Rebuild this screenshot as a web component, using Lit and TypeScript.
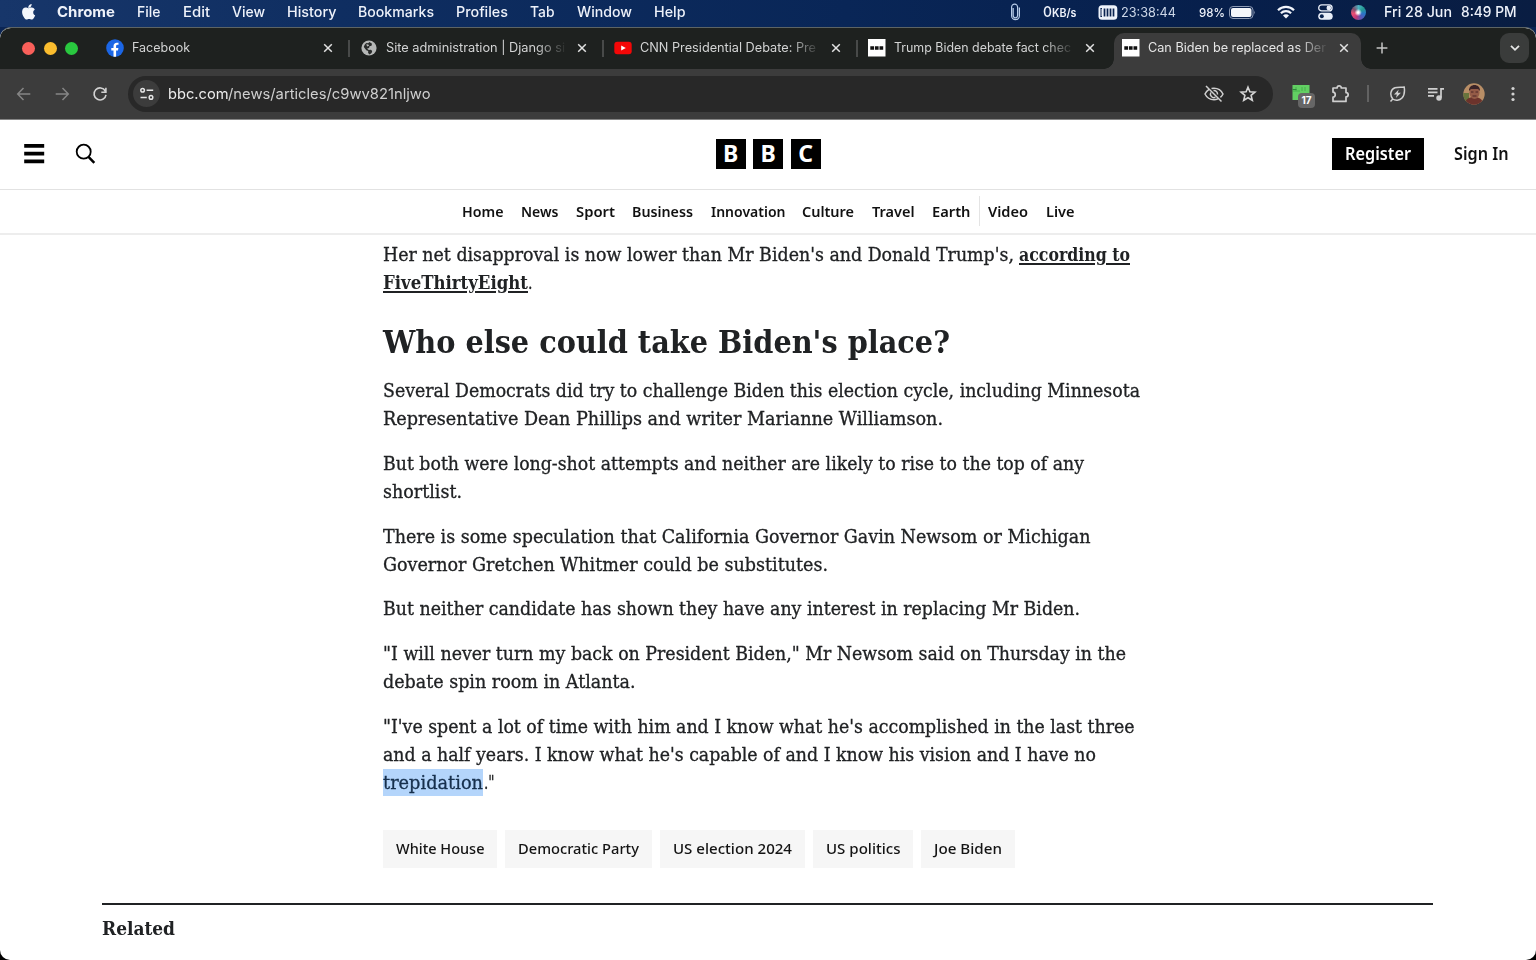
import { LitElement, html, css, nothing } from "lit";
import { customElement, property, state, query } from "lit/decorators.js";
import { styleMap } from "lit/directives/style-map.js";
import { classMap } from "lit/directives/class-map.js";

/** A run of text set to an exact measure. */
@customElement("fit-text")
class FitText extends LitElement {
  static styles = css`
    :host { display: inline-block; white-space: pre; flex: none; }
    .run { display: inline-block; transform-origin: 0 50%; }
    :host([underlined]) .run { text-decoration: underline; text-decoration-thickness: 1.5px; text-underline-offset: 2px; }
    .box { display: block; }
  `;
  @property({ type: Number }) w = 0;
  @state() private scale = 1;
  @query(".run") private run!: HTMLElement;

  firstUpdated() {
    this.measure();
    document.fonts.ready.then(() => this.measure());
  }

  private measure() {
    const natural = this.run.getBoundingClientRect().width / this.scale;
    if (natural > 0 && this.w > 0) this.scale = this.w / natural;
  }

  render() {
    return html`<span class="box" style=${styleMap({ width: this.w + "px" })}><span class="run" style=${styleMap({ transform: `scaleX(${this.scale})` })}><slot></slot></span></span>`;
  }
}

const t = (text: string, w: number, cls = "") => html`<fit-text class=${cls} w=${w}>${text}</fit-text>`;

@customElement("menu-bar")
class MenuBar extends LitElement {
  static styles = css`
    :host { display: flex; align-items: center; height: 27px; padding-bottom: 3px; box-sizing: border-box; color: #eef2fa;
      background: linear-gradient(90deg, #17366a 0%, #0e2d60 25%, #092657 55%, #071f4b 80%, #091d42 100%);
      font: 500 14.5px/24px Inter, "Liberation Sans", sans-serif; }
    svg { display: block; flex: none; }
    .apple { margin: 0 21px 0 21px; }
    .menus { display: flex; gap: 22px; }
    .app { font-weight: 700; }
    .status { display: flex; align-items: center; margin-left: auto; padding-right: 20px; }
    .clip { margin-right: 21.5px; }
    .rate { font-size: 11.5px; margin-right: 22px; font-weight: 600; padding-top: 1px; }
    .zero { font-size: 15px; font-weight: 500; }
    .timer { font-size: 12.5px; font-weight: 400; margin: 0 23px 0 2.5px; color: #cdd7e8; padding-top: 1px; }
    .pct { font-size: 12px; margin-right: 4.5px; padding-top: 1px; }
    .battery { margin-right: 21px; }
    .wifi { margin-right: 22.5px; }
    .control { margin-right: 18px; }
    .orb { width: 15px; height: 15px; border-radius: 50%; margin-right: 18px;
      background: radial-gradient(circle at 48% 50%, #fff 0 8%, transparent 34%), conic-gradient(#4bb2c2, #249b92, #2776c9, #5b56b7, #bf3977, #ec4e74, #7b516f, #4bb2c2); }
    .date { margin-right: 9px; }
  `;
  private menus: [string, number][] = [["File", 23.5], ["Edit", 27], ["View", 33], ["History", 49.5], ["Bookmarks", 76], ["Profiles", 52], ["Tab", 24.5], ["Window", 55], ["Help", 31.5]];
  render() {
    return html`
      <svg class="apple" width="15" height="18" viewBox="0 0 15 18"><path fill="#f4f7fc" d="M10.6 1c.1 1.100-.3 2.050-.9 2.800-.65.750-1.600 1.250-2.450 1.200-.1-1 .35-2.050.95-2.700C8.850 1.550 9.850 1.050 10.600 1zM13.800 6.700c-1 .6-1.600 1.500-1.600 2.700 0 1.400.8 2.400 2 2.900-.3.900-.7 1.700-1.200 2.400-.7 1-1.300 1.900-2.300 1.900s-1.400-.6-2.600-.6c-1.200 0-1.600.6-2.500.6-1 0-1.700-.9-2.400-1.900C1.900 12.900.9 10.400 1.100 8.500c.2-2.400 1.700-3.900 3.500-3.900 1.100 0 2.100.7 2.900.7.700 0 1.900-.8 3.300-.7 1.300.1 2.300.6 3 2.100z"/></svg>
      <div class="menus">${t("Chrome", 58, "app")}${this.menus.map(([m, w]) => t(m, w))}</div>
      <div class="status">
        <svg class="clip" width="11" height="18" viewBox="0 0 11 18" fill="none" stroke="#b7cbe8" stroke-width="1.200"><path d="M3.200 5v7.600a2.200 2.200 0 0 0 4.400 0V4.200a3 3 0 0 0-6-.2v8.700a3.900 3.900 0 0 0 7.800 0V4.500"/></svg>
        <div class="rate">${t("0", 9, "zero")}${t("KB/s", 24.500)}</div>
        <svg width="20" height="15" viewBox="0 0 20 15"><rect x=".5" y=".2" width="18.800" height="14.600" rx="3.500" fill="#eef3fb"/><path d="M3 3.500v8M2.500 3.500h1.500M2.500 11.500h1.500" stroke="#0a2350" stroke-width="1"/><path d="M6.500 3.500v8M9.500 3.500v8M12.500 3.500v8M15.500 3.500v8" stroke="#0a2350" stroke-width="1.700"/></svg>
        ${t("23:38:44", 55, "timer")}
        ${t("98%", 26, "pct")}
        <svg class="battery" width="27" height="13" viewBox="0 0 27 13"><rect x=".5" y=".5" width="23.500" height="12" rx="3.500" fill="none" stroke="#8d9ab4"/><rect x="2" y="2" width="20.500" height="9" rx="2" fill="#f4f6fa"/><path d="M25.200 4.500q1.500 1.800 0 4z" fill="#8d9ab4"/></svg>
        <svg class="wifi" width="18" height="14" viewBox="0 0 18 14" fill="none" stroke="#f2f5fb" stroke-width="2.200"><path d="M1 5.200a11.300 11.300 0 0 1 16 0M3.900 8.300a7.200 7.200 0 0 1 10.200 0"/><path d="M9 13.500L6 10.500a4.200 4.200 0 0 1 6 0z" fill="#f2f5fb" stroke="none"/></svg>
        <svg class="control" width="15" height="16" viewBox="0 0 15 16"><rect x=".7" y=".9" width="13.400" height="6" rx="3" fill="none" stroke="#e9eef8" stroke-width="1.300"/><circle cx="10.800" cy="3.900" r="2.300" fill="#e9eef8"/><rect x=".2" y="8.800" width="14.500" height="7" rx="3.500" fill="#e9eef8"/><circle cx="3.800" cy="12.300" r="2" fill="#0a2350"/></svg>
        <div class="orb"></div>
        ${t("Fri 28 Jun", 68, "date")}${t("8:49 PM", 55.500)}
      </div>`;
  }
}

const bbcIcon = html`<svg width="18" height="18" viewBox="0 0 18 18"><path fill="#fff" d="M0 0h17.500v17.500H0z"/><path fill="#111" d="M2.300 7.200H6v3.500H2.300zM6.900 7.200h3.700v3.500H6.900zM11.500 7.200h3.700v3.500h-3.700z"/></svg>`;

@customElement("tab-strip")
class TabStrip extends LitElement {
  static styles = css`
    :host { display: flex; height: 41px; background: #1e211f; color: #d3d4d4; box-sizing: border-box; border-radius: 10px 10px 0 0; font: 400 12.800px/20px Inter, "Liberation Sans", sans-serif; }
    svg { display: block; flex: none; }
    .lights { display: flex; gap: 8.500px; padding: 13.500px 0 0 22px; width: 76px; flex: none; }
    .light { width: 13px; height: 13px; border-radius: 50%; }
    .red { background: #f9605a; }
    .yellow { background: #fbbd2e; }
    .green { background: #29c83f; }
    .tab { display: flex; width: 254px; height: 36px; margin-top: 5px; box-sizing: border-box; padding: 0 0 6px 8px; align-items: center; position: relative; }
    .favicon { width: 18px; margin-right: 8px; }
    .title { width: 179px; overflow: hidden; display: flex; margin-right: 11px; }
    .faded { -webkit-mask-image: linear-gradient(90deg, #000 150px, transparent 181px); }
    .divider { width: 1.500px; height: 17px; background: #484a49; margin-left: 14px; }
    .active { background: #3c3c3c; border-radius: 10px 10px 0 0; width: 247px; color: #e6e6e6; }
    .active::before, .active::after { content: ""; position: absolute; bottom: 0; width: 10px; height: 10px; }
    .active::before { left: -10px; background: radial-gradient(circle at 0 0, transparent 9.500px, #3c3c3c 10px); }
    .active::after { right: -10px; background: radial-gradient(circle at 100% 0, transparent 9.500px, #3c3c3c 10px); }
    .plus { margin: 14px 0 0 15px; }
    .more { width: 29px; height: 30px; border-radius: 9px; background: #3a3c3b; margin: 5px 7px 0 auto; display: flex; align-items: center; justify-content: center; }
  `;
  private icons = [
    html`<svg width="18" height="18" viewBox="0 0 18 18"><circle cx="9" cy="9" r="8.800" fill="#1b66e5"/><path fill="#fff" d="M7.500 17.700v-6.200H5.300V9h2.200V7.200c0-2.300 1.300-3.500 3.300-3.500.8 0 1.700.1 1.700.1v2h-1c-1 0-1.400.6-1.400 1.300V9h2.300l-.4 2.500h-1.900v6.200z"/></svg>`,
    html`<svg width="18" height="18" viewBox="0 0 18 18"><circle cx="9" cy="9" r="7.600" fill="#b5b7b6"/><path fill="#292b2a" d="M9.500 3.100 12 4.700l-.5 2-2 .5-.4 1.900-2 .3 1.600 1.500 2.300-.1 1.200 1.300-.6 2-2.100 1.400-1.400-1.400.1-2.100-1.900-.8-2.500-3.100C4.100 6.600 5 4.800 6.500 3.900l1.600.4z"/><path fill="#b5b7b6" d="m6.300 5.200 2 .3.800 1.300-2 .8zM11.700 9.200l3-.8.300 2-2 .8z"/></svg>`,
    html`<svg width="18" height="18" viewBox="0 0 18 18"><rect x=".3" y="2.800" width="17.400" height="12.400" rx="3" fill="#f40707"/><path fill="#fff" d="m7.200 6.500 4.600 2.500-4.600 2.500z"/></svg>`,
    bbcIcon, bbcIcon,
  ];
  private tabs: [string, number][] = [["Facebook", 58], ["Site administration | Django si", 179], ["CNN Presidential Debate: Pre", 176], ["Trump Biden debate fact chec", 177], ["Can Biden be replaced as Der", 178]];
  render() {
    return html`
      <div class="lights"><div class="light red"></div><div class="light yellow"></div><div class="light green"></div></div>
      ${this.tabs.map(([title, w], i) => html`
        <div class=${classMap({ tab: true, active: i === 4 })}>
          <div class="favicon">${this.icons[i]}</div>
          <div class=${classMap({ title: true, faded: i > 0 })}>${t(title, w)}</div>
          <svg width="12" height="12" viewBox="0 0 12 12" stroke="#e2e2e2" stroke-width="1.500"><path d="m2.200 2.200 7.600 7.600M9.800 2.200 2.200 9.800"/></svg>
          ${i < 3 ? html`<div class="divider"></div>` : nothing}
        </div>`)}
      <svg class="plus" width="12" height="12" viewBox="0 0 12 12" stroke="#c5c5c5" stroke-width="1.500"><path d="M6 .6v10.800M.6 6h10.800"/></svg>
      <div class="more"><svg width="10" height="8" viewBox="0 0 10 8" fill="none" stroke="#e6e6e6" stroke-width="1.800"><path d="m1 1.800 4 4 4-4"/></svg></div>`;
  }
}

@customElement("tool-bar")
class ToolBar extends LitElement {
  static styles = css`
    :host { display: flex; align-items: center; height: 51px; padding-bottom: 1px; border-bottom: 1px solid #858585; background: #3c3c3c; box-sizing: border-box; font: 400 14.500px/22px Inter, "Liberation Sans", sans-serif; color: #cfcfcf; }
    svg { display: block; flex: none; }
    .nav { display: flex; gap: 20px; padding-left: 15px; width: 113px; flex: none; }
    .omnibox { display: flex; align-items: center; width: 1145px; height: 36px; border-radius: 18px; background: #282828; box-sizing: border-box; padding: 0 16px 0 5px; flex: none; }
    .site { width: 27px; height: 27px; border-radius: 50%; background: #3c3c3c; display: flex; align-items: center; justify-content: center; margin-right: 7.500px; }
    .domain { color: #ececec; }
    .eye { margin: 0 15px 0 auto; }
    .calendar { position: relative; width: 24px; height: 24px; margin-left: 18px; }
    .badge { position: absolute; left: 7px; top: 11px; width: 17px; height: 15px; border-radius: 4px; background: #666; color: #fff; font: 700 10px/15px Inter, sans-serif; text-align: center; }
    .puzzle { margin-left: 16px; }
    .divider { width: 1.500px; height: 17px; background: #626262; margin: 0 20px 0 17px; }
    .music { margin: 0 18px 0 21px; }
    .dots { margin-left: 25px; }
  `;
  render() {
    return html`
      <div class="nav">
        <svg width="18" height="18" viewBox="0 0 18 18" fill="none" stroke="#858585" stroke-width="1.500"><path d="M15.300 9H3M8.500 3 2.700 9l5.800 6"/></svg>
        <svg width="18" height="18" viewBox="0 0 18 18" fill="none" stroke="#858585" stroke-width="1.500"><path d="M2.700 9H15M9.500 3l5.800 6-5.800 6"/></svg>
        <svg width="18" height="18" viewBox="0 0 18 18" fill="none" stroke="#d1d1d1" stroke-width="1.600"><path d="M14.300 6A6 6 0 1 0 15 9.800M14.900 2.700v4.500h-4.600"/></svg>
      </div>
      <div class="omnibox">
        <div class="site"><svg width="16" height="16" viewBox="0 0 16 16" fill="none" stroke="#e5e5e5" stroke-width="1.500"><circle cx="3.600" cy="4.200" r="1.800"/><path d="M7.600 4.200h6.600M1.500 11.400h6.300"/><circle cx="12" cy="11.400" r="1.800"/></svg></div>
        ${t("bbc.com", 60.500, "domain")}${t("/news/articles/c9wv821nljwo", 202.500)}
        <svg class="eye" width="20" height="20" viewBox="0 0 20 20" fill="none" stroke="#cfcfcf" stroke-width="1.500"><path d="m2 2 15.500 15.500M5 5.300C3.300 6.400 1.900 8 1 10c1.700 3.500 5 5.700 9 5.700 1.400 0 2.700-.3 3.900-.8M7.500 4.600c.8-.2 1.600-.3 2.500-.3 4 0 7.300 2.200 9 5.700-.6 1.300-1.500 2.500-2.600 3.400M6.700 8.500a3.600 3.600 0 0 0 4.700 4.800M9.500 6.500a3.600 3.600 0 0 1 4 4"/></svg>
        <svg width="18" height="18" viewBox="0 0 18 18" fill="none" stroke="#d5d5d5" stroke-width="1.600"><path d="m9 2.200 1.900 4.600 5 .4-3.800 3.200 1.200 4.900L9 12.700l-4.300 2.600 1.200-4.900-3.800-3.200 5-.4z"/></svg>
      </div>
      <div class="calendar"><svg width="19" height="19" viewBox="0 0 19 19"><path fill="#62cf63" d="M1.500 3h17v15h-17z"/><path d="M2 9h7M11 5v4M14 5v4M5 5v4" stroke="#46b04c" stroke-width="1"/><path d="M1.500 7.500h4" stroke="#2c8a3a"/></svg><div class="badge">17</div></div>
      <svg class="puzzle" width="19" height="20" viewBox="0 0 19 20" fill="none" stroke="#cfcfcf" stroke-width="1.700"><path stroke-linejoin="round" d="M2 4h4.100c0-2.800 4.200-2.800 4.200 0H15v4.600c2.900 0 2.900 4.200 0 4.200V17.400H2v-4.200c3-.3 3-4.700 0-5z"/></svg>
      <div class="divider"></div>
      <svg width="17" height="18" viewBox="0 0 17 18" fill="none" stroke="#cfcfcf" stroke-width="1.500"><path d="M1.500 16.500 3.800 14M3.800 14C.5 10 1.400 4.500 6 2.800 8.700 1.800 12 2.500 15.200 2c.6 4 .4 8.300-2.200 11-2.500 2.500-6.600 3-9.200 1z"/><path fill="#cfcfcf" stroke="none" d="M9.700 4.500 5 9.600h2.900l-1 3.400 5-5.200H8.800z"/></svg>
      <svg class="music" width="18" height="16" viewBox="0 0 18 16" fill="none" stroke="#cfcfcf" stroke-width="1.700"><path d="M1 2.800h9.500M1 6.300h9.500M1 9.800h6M17 2.800h-3v9"/><circle cx="12" cy="11.900" r="1.900" fill="#cfcfcf"/></svg>
      <svg width="22" height="22" viewBox="0 0 22 22"><defs><clipPath id="face"><circle cx="11" cy="11" r="10.700"/></clipPath></defs><g clip-path="url(#face)"><path fill="#b88e66" d="M0 0h22v22H0z"/><path fill="#68743d" d="M0 10h6v9H0z"/><path fill="#6c332c" d="M2 22c0-6 4-8 9-8s9 2 9 8z"/><ellipse cx="11.500" cy="9.500" rx="5" ry="6.500" fill="#945b47"/><path fill="#3b2428" d="M6 8c-.5-8 11.500-8 11 0l-2-2H8z"/><path d="M8 9h2.500M12.500 9H15M9.500 13h4" stroke="#4b2627" stroke-width="1.200"/></g></svg>
      <svg class="dots" width="6" height="18" viewBox="0 0 6 18" fill="#d3d3d3"><circle cx="3" cy="3.500" r="1.600"/><circle cx="3" cy="9" r="1.600"/><circle cx="3" cy="14.500" r="1.600"/></svg>`;
  }
}

@customElement("site-header")
class SiteHeader extends LitElement {
  static styles = css`
    :host { display: block; background: #fff; color: #111; font-family: "Noto Sans", "Open Sans", sans-serif; font-weight: 600; }
    svg { display: block; }
    .top { display: grid; grid-template-columns: 1fr auto 1fr; align-items: center; height: 70px; border-bottom: 1px solid #e2e2e2; box-sizing: border-box; padding: 0 28px 2px 24px; }
    .left { display: flex; gap: 30px; align-items: center; }
    .logo { display: flex; gap: 7.500px; margin-left: 4.500px; }
    .block { width: 30px; height: 30px; background: #000; color: #fff; display: flex; align-items: center; justify-content: center; font: 700 23px/28px "Noto Sans", sans-serif; }
    .letter { height: 30px; }
    .right { display: flex; align-items: center; justify-content: flex-end; font-size: 17.300px; line-height: 32px; gap: 29.500px; }
    .register { background: #000; color: #fff; height: 32px; padding: 0 13px; }
    .nav { display: flex; height: 45px; border-bottom: 2px solid #ededed; box-sizing: border-box; align-items: center; padding: 0 0 1px 462px; font-size: 15px; line-height: 22px; gap: 17.400px; }
    .rule { width: 1px; height: 30px; background: #e4e4e4; margin: 0 -9.400px 0 -8.400px; }
  `;
  private links: [string, number][] = [["Home", 41.5], ["News", 37.5], ["Sport", 39], ["Business", 61], ["Innovation", 74.500], ["Culture", 52], ["Travel", 42.500], ["Earth", 38.500]];
  render() {
    return html`
      <div class="top">
        <div class="left">
          <svg width="21" height="20" viewBox="0 0 21 20"><path d="M.2 0h20v3.800H.2zM.2 7.700h20v3.800H.2zM.2 15.400h20v3.800H.2z"/></svg>
          <svg width="22" height="22" viewBox="0 0 22 22" fill="none" stroke="#000"><circle cx="8.700" cy="8.700" r="7" stroke-width="1.800"/><path d="m13.500 13.800 5.800 6" stroke-width="2.500"/></svg>
        </div>
        <div class="logo">${["B", "B", "C"].map((l) => html`<div class="block"><div class="letter">${l}</div></div>`)}</div>
        <div class="right"><div class="register">${t("Register", 66)}</div>${t("Sign In", 54.500)}</div>
      </div>
      <div class="nav">${this.links.map(([l, w]) => t(l, w))}<div class="rule"></div>${t("Video", 40)}${t("Live", 28.500)}</div>`;
  }
}

@customElement("news-article")
class NewsArticle extends LitElement {
  static styles = css`
    :host { display: block; color: #202224; font: 400 19px/27.800px "DejaVu Serif Condensed", "DejaVu Serif", serif; font-stretch: condensed; padding-top: 5.900px; }
    .body { margin-left: 383px; width: 770px; -webkit-text-stroke: 0.300px currentColor; }
    .para { margin-bottom: 17.100px; }
    .line { display: flex; height: 27.800px; }
    .link { font-weight: 700; -webkit-text-stroke: 0; }
    .gap { margin-left: 5px; }
    .heading { font-weight: 700; font-size: 32px; line-height: 46px; margin: 22.500px 0 12.400px; height: 46px; -webkit-text-stroke: 0; }
    .marked { background: #b4d5fb; color: #17304d; margin-right: 1px; }
    .tags { display: flex; gap: 8px; margin-top: 33.500px; font: 500 15px/36.500px "Noto Sans", "Open Sans", sans-serif; color: #141414; -webkit-text-stroke: 0; }
    .tag { background: #f6f6f6; padding: 0 12.900px; height: 38px; }
    .related { margin: 34.900px 103px 0 102px; border-top: 2px solid #202224; padding-top: 10.500px; font-weight: 700; font-size: 19px; }
  `;
  private paragraphs: [string, number][][] = [
    [["Several Democrats did try to challenge Biden this election cycle, including Minnesota", 757], ["Representative Dean Phillips and writer Marianne Williamson.", 560]],
    [["But both were long-shot attempts and neither are likely to rise to the top of any", 701], ["shortlist.", 79]],
    [["There is some speculation that California Governor Gavin Newsom or Michigan", 707.500], ["Governor Gretchen Whitmer could be substitutes.", 445]],
    [["But neither candidate has shown they have any interest in replacing Mr Biden.", 697]],
    [["\"I will never turn my back on President Biden,\" Mr Newsom said on Thursday in the", 743], ["debate spin room in Atlanta.", 252.500]],
  ];
  private tags: [string, number][] = [["White House", 88.500], ["Democratic Party", 121], ["US election 2024", 119], ["US politics", 74.500], ["Joe Biden", 68]];
  render() {
    return html`
      <div class="body">
        <div>
          <div class="line">${t("Her net disapproval is now lower than Mr Biden's and Donald Trump's,", 631)}<fit-text underlined class="link gap" w="111">according to</fit-text></div>
          <div class="line"><fit-text underlined class="link" w="145">FiveThirtyEight</fit-text>${t(".", 4.500)}</div>
        </div>
        <div class="heading">${t("Who else could take Biden's place?", 567)}</div>
        ${this.paragraphs.map((p) => html`<div class="para">${p.map(([l, w]) => html`<div class="line">${t(l, w)}</div>`)}</div>`)}
        <div>
          <div class="line">${t("\"I've spent a lot of time with him and I know what he's accomplished in the last three", 751.500)}</div>
          <div class="line">${t("and a half years. I know what he's capable of and I know his vision and I have no", 713)}</div>
          <div class="line">${t("trepidation", 100, "marked")}${t(".\"", 10.500)}</div>
        </div>
        <div class="tags">${this.tags.map(([l, w]) => html`<div class="tag">${t(l, w)}</div>`)}</div>
      </div>
      <div class="related">${t("Related", 73)}</div>`;
  }
}

@customElement("app-root")
class AppRoot extends LitElement {
  static styles = css`
    :host { display: block; width: 1536px; height: 960px; overflow: hidden; background: linear-gradient(#0b2554 0 60px, #000 60px); }
    .window { height: 933px; box-sizing: border-box; border-top: 1px solid #5d6464; border-radius: 11px 11px 10px 10px; overflow: hidden; background: #fff; }
  `;
  render() {
    return html`<menu-bar></menu-bar><div class="window"><tab-strip></tab-strip><tool-bar></tool-bar><site-header></site-header><news-article></news-article></div>`;
  }
}
